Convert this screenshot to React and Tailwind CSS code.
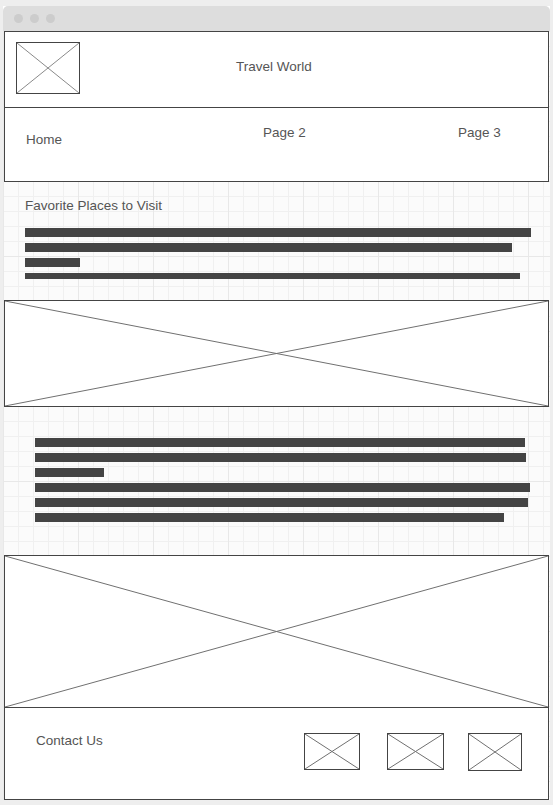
import React from "react";

function XBox({ className = "", stroke = "#707070" }) {
  return (
    <div className={"border border-[#444444] bg-white " + className}>
      <svg className="block w-full h-full" viewBox="0 0 100 100" preserveAspectRatio="none">
        <line x1="0" y1="0" x2="100" y2="100" stroke={stroke} strokeWidth="1" vectorEffect="non-scaling-stroke" />
        <line x1="100" y1="0" x2="0" y2="100" stroke={stroke} strokeWidth="1" vectorEffect="non-scaling-stroke" />
      </svg>
    </div>
  );
}

function Bar({ w, h = "h-[9px]" }) {
  return <div className={"bg-[#444444] " + h + " " + w}></div>;
}

export default function App() {
  return (
    <div
      className="min-h-[805px] bg-[#eeeeee] pt-[6px] pl-[3px] text-[13.5px] text-[#555555]"
      style={{ fontFamily: '"Liberation Sans", Arial, sans-serif' }}
    >
      <div className="w-[547px] bg-white">
        <div className="h-[25px] bg-[#dddddd] rounded-t-[5px] flex items-center gap-[7px] pl-[11px]">
          <div className="w-[9px] h-[9px] rounded-full bg-[#cccccc]"></div>
          <div className="w-[9px] h-[9px] rounded-full bg-[#cccccc]"></div>
          <div className="w-[9px] h-[9px] rounded-full bg-[#cccccc]"></div>
        </div>
        <div className="px-[1px] bg-[#fbfbfb] bg-[linear-gradient(to_right,#e8e8e8_1px,transparent_1px),linear-gradient(to_bottom,#e8e8e8_1px,transparent_1px),linear-gradient(to_right,#f0f0f0_1px,transparent_1px),linear-gradient(to_bottom,#f0f0f0_1px,transparent_1px)] [background-size:75px_75px,75px_75px,15px_15px,15px_15px]">
          {/* header */}
          <div className="h-[77px] border border-[#444444] bg-white flex items-start pt-[10px] pl-[11px]">
            <XBox className="w-[64px] h-[52px]" stroke="#8a8a8a" />
            <div className="ml-[156px] mt-[17px] leading-[16px]">Travel World</div>
          </div>
          {/* nav */}
          <div className="h-[74px] border-x border-b border-[#444444] bg-white flex items-start pl-[21px] leading-[16px]">
            <div className="w-[237px] mt-[24px]">Home</div>
            <div className="w-[195px] mt-[17px]">Page 2</div>
            <div className="mt-[17px]">Page 3</div>
          </div>
          {/* section 1 */}
          <div className="h-[118px] pl-[21px] pt-[16px]">
            <div className="leading-[16px]">Favorite Places to Visit</div>
            <div className="mt-[14px] flex flex-col gap-[6px]">
              <Bar w="w-[506px]" />
              <Bar w="w-[487px]" />
              <Bar w="w-[55px]" />
              <Bar w="w-[495px]" h="h-[6px]" />
            </div>
          </div>
          <XBox className="h-[107px]" />
          {/* section 2 */}
          <div className="h-[148px] pl-[31px] pt-[31px]">
            <div className="flex flex-col gap-[6px]">
              <Bar w="w-[490px]" />
              <Bar w="w-[491px]" />
              <Bar w="w-[69px]" />
              <Bar w="w-[495px]" />
              <Bar w="w-[493px]" />
              <Bar w="w-[469px]" />
            </div>
          </div>
          <XBox className="h-[153px]" />
          {/* footer */}
          <div className="h-[92px] border-x border-b border-[#444444] bg-white flex items-start pl-[31px]">
            <div className="w-[268px] mt-[25px] leading-[16px]">Contact Us</div>
            <XBox className="mt-[25px] w-[56px] h-[37px]" stroke="#707070" />
            <XBox className="mt-[25px] ml-[27px] w-[57px] h-[37px]" stroke="#707070" />
            <XBox className="mt-[25px] ml-[24px] w-[54px] h-[38px]" stroke="#707070" />
          </div>
        </div>
      </div>
    </div>
  );
}
